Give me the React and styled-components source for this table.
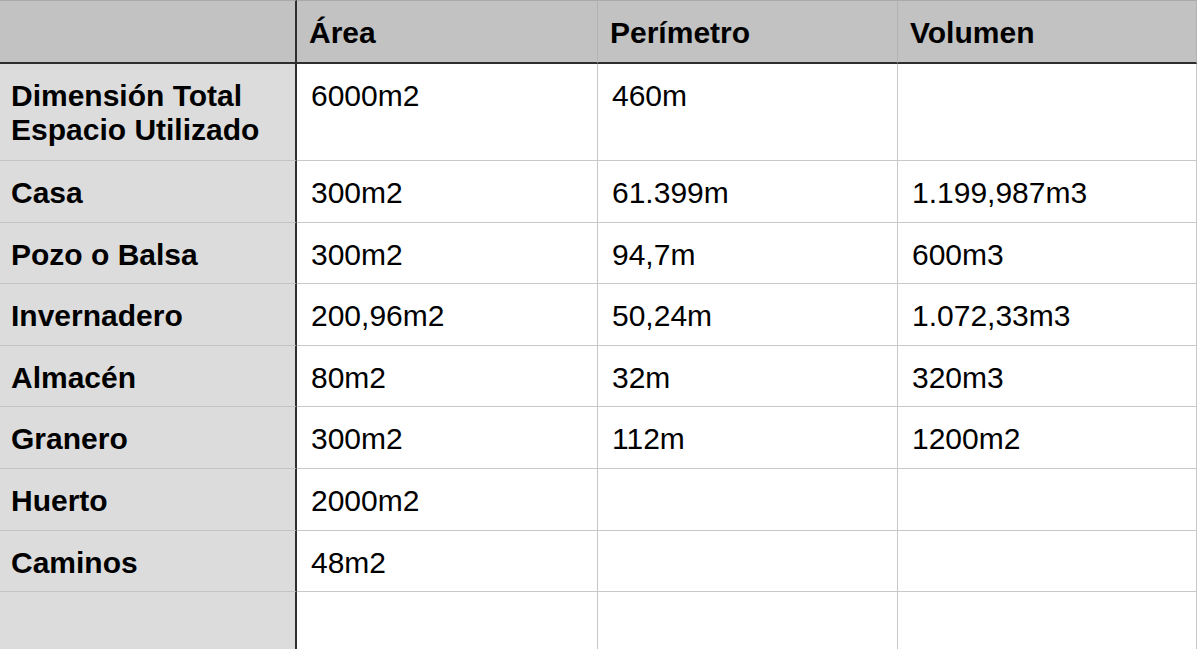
import styled, { createGlobalStyle } from "styled-components";

const Global = createGlobalStyle`
  html, body {
    margin: 0;
    padding: 0;
    background: #fff;
    overflow: hidden;
  }
  body {
    font-family: "Liberation Sans", Arial, sans-serif;
    color: #000;
  }
`;

const Table = styled.table`
  width: 1197px;
  table-layout: fixed;
  border-collapse: separate;
  border-spacing: 0;
  font-size: 30px;
  line-height: 34px;
`;

const HeadRow = styled.tr`
  height: 64px;
  background: #c1c2c1;
`;

const Row = styled.tr`
  height: ${(p) => (p.$tall ? "97px" : "61.6px")};
`;

const HeadCell = styled.th`
  box-sizing: border-box;
  text-align: left;
  vertical-align: top;
  font-weight: 700;
  padding: 15px 12px 0 12px;
  border-top: 1px solid #a9aaa9;
  border-bottom: 2px solid #2e2e2e;
  border-right: ${(p) => (p.$first ? "2px solid #2e2e2e" : "1px solid #b2b3b2")};
`;

const LabelCell = styled.td`
  box-sizing: border-box;
  vertical-align: top;
  font-weight: 700;
  background: #dcdcdc;
  padding: 15px 12px 0 11px;
  border-right: 2px solid #2e2e2e;
  border-bottom: 1px solid #c3c3c3;
`;

const Cell = styled.td`
  box-sizing: border-box;
  vertical-align: top;
  padding: 15px 12px 0 14px;
  border-right: 1px solid #c8c8c8;
  border-bottom: 1px solid #c8c8c8;
`;

const rows = [
  { label: ["Dimensión Total", "Espacio Utilizado"], area: "6000m2", per: "460m", vol: "", tall: true },
  { label: ["Casa"], area: "300m2", per: "61.399m", vol: "1.199,987m3" },
  { label: ["Pozo o Balsa"], area: "300m2", per: "94,7m", vol: "600m3" },
  { label: ["Invernadero"], area: "200,96m2", per: "50,24m", vol: "1.072,33m3" },
  { label: ["Almacén"], area: "80m2", per: "32m", vol: "320m3" },
  { label: ["Granero"], area: "300m2", per: "112m", vol: "1200m2" },
  { label: ["Huerto"], area: "2000m2", per: "", vol: "" },
  { label: ["Caminos"], area: "48m2", per: "", vol: "" },
  { label: [""], area: "", per: "", vol: "" },
];

export default function App() {
  return (
    <>
      <Global />
      <Table>
        <colgroup>
          <col style={{ width: 297 }} />
          <col style={{ width: 301 }} />
          <col style={{ width: 300 }} />
          <col style={{ width: 299 }} />
        </colgroup>
        <thead>
          <HeadRow>
            <HeadCell $first />
            <HeadCell>Área</HeadCell>
            <HeadCell>Perímetro</HeadCell>
            <HeadCell>Volumen</HeadCell>
          </HeadRow>
        </thead>
        <tbody>
          {rows.map((r, i) => (
            <Row key={i} $tall={r.tall}>
              <LabelCell>
                {r.label.map((l, j) => (
                  <div key={j}>{l}</div>
                ))}
              </LabelCell>
              <Cell>{r.area}</Cell>
              <Cell>{r.per}</Cell>
              <Cell>{r.vol}</Cell>
            </Row>
          ))}
        </tbody>
      </Table>
    </>
  );
}
